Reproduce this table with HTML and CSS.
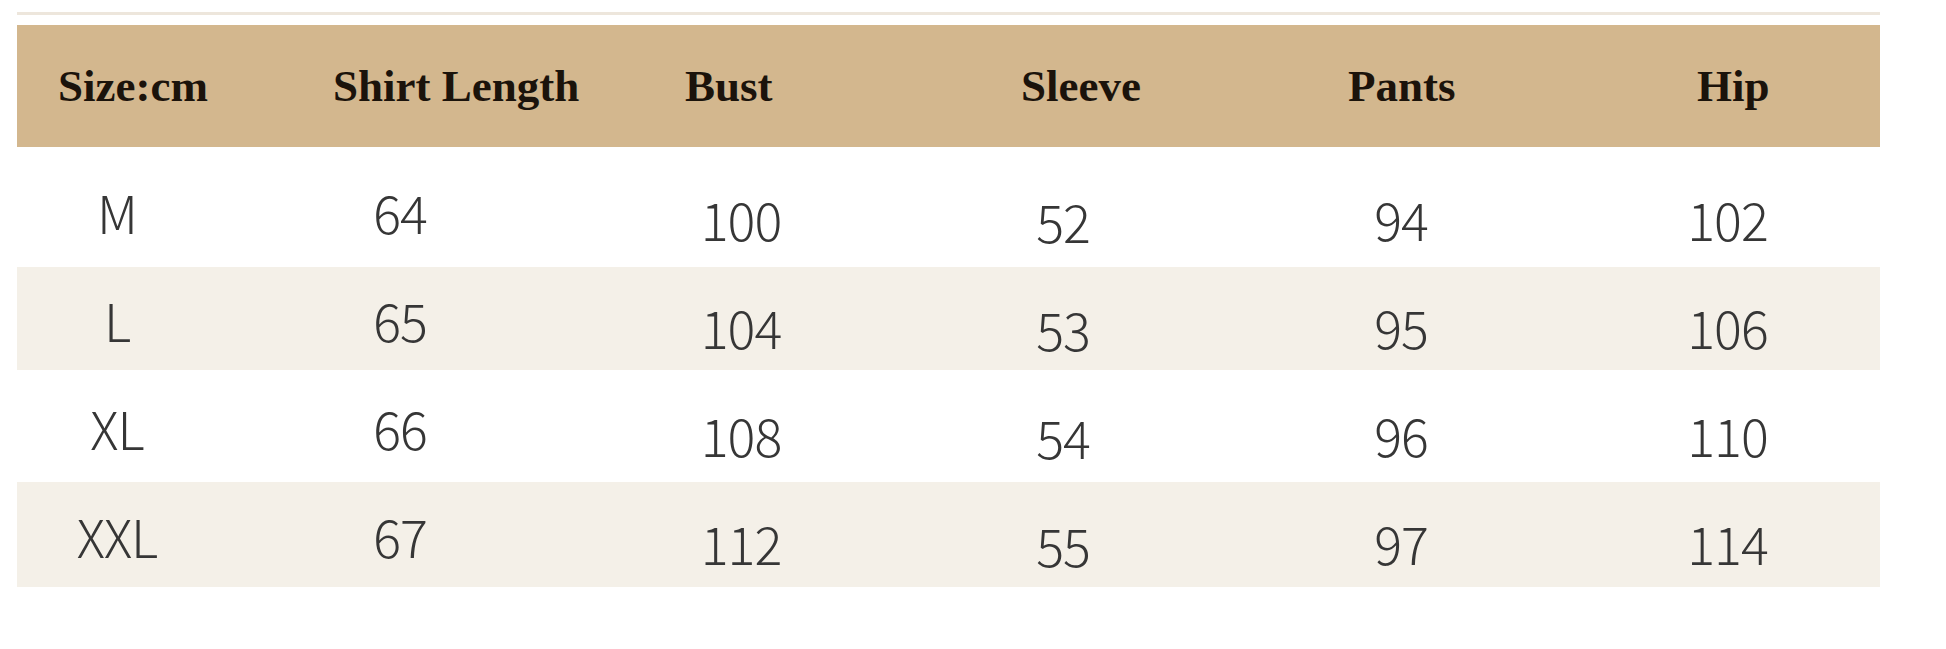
FILE: index.html
```html
<!DOCTYPE html>
<html lang="en">
<head>
<meta charset="utf-8">
<title>Size chart</title>
<link rel="stylesheet" href="styles.css">
</head>
<body>
<div class="chart">
  <div class="rule"></div>
  <div class="head">
    <div class="hcell">Size:cm</div>
    <div class="hcell">Shirt Length</div>
    <div class="hcell">Bust</div>
    <div class="hcell">Sleeve</div>
    <div class="hcell">Pants</div>
    <div class="hcell">Hip</div>
  </div>
  <div class="body">
    <div class="row first">
      <div class="cell">M</div><div class="cell">64</div><div class="cell low">100</div><div class="cell lower">52</div><div class="cell low">94</div><div class="cell low">102</div>
    </div>
    <div class="row alt">
      <div class="cell">L</div><div class="cell">65</div><div class="cell low">104</div><div class="cell lower">53</div><div class="cell low">95</div><div class="cell low">106</div>
    </div>
    <div class="row mid">
      <div class="cell">XL</div><div class="cell">66</div><div class="cell low">108</div><div class="cell lower">54</div><div class="cell low">96</div><div class="cell low">110</div>
    </div>
    <div class="row alt last">
      <div class="cell">XXL</div><div class="cell">67</div><div class="cell low">112</div><div class="cell lower">55</div><div class="cell low">97</div><div class="cell low">114</div>
    </div>
  </div>
</div>
</body>
</html>
```

FILE: styles.css
```css
html, body {
  margin: 0;
  padding: 0;
  background: #ffffff;
}

.chart {
  width: 1863px;
  margin-left: 17px;
  padding-top: 12px;
}

.rule {
  height: 3px;
  background: #ede6dc;
  margin-bottom: 10px;
}

.head {
  height: 122px;
  background: #d3b78e;
  display: grid;
  grid-template-columns: 275px 352px 336px 327px 349px 1fr;
  align-items: center;
  padding-left: 41px;
  box-sizing: border-box;
}

.hcell {
  font-family: "Liberation Serif", "Times New Roman", serif;
  font-weight: bold;
  font-size: 45px;
  line-height: 1;
  color: #1b130b;
  white-space: nowrap;
}

.row {
  display: grid;
  grid-template-columns: 200px 366px 316px 328px 348px 1fr;
  align-items: center;
  box-sizing: border-box;
  padding-top: 2px;
}

.row.first { height: 120px; padding-top: 10px; }
.row.alt { height: 103px; background: #f4f0e8; }
.row.mid { height: 112px; padding-top: 4px; }
.row.last { height: 105px; }

.cell {
  text-align: center;
  font-family: "Noto Sans CJK SC", "Noto Sans", sans-serif;
  font-weight: 300;
  font-size: 52px;
  line-height: 1;
  color: #363636;
  letter-spacing: -1px;
}

.cell.low { padding-top: 14px; }
.cell.lower { padding-top: 18px; }
```
